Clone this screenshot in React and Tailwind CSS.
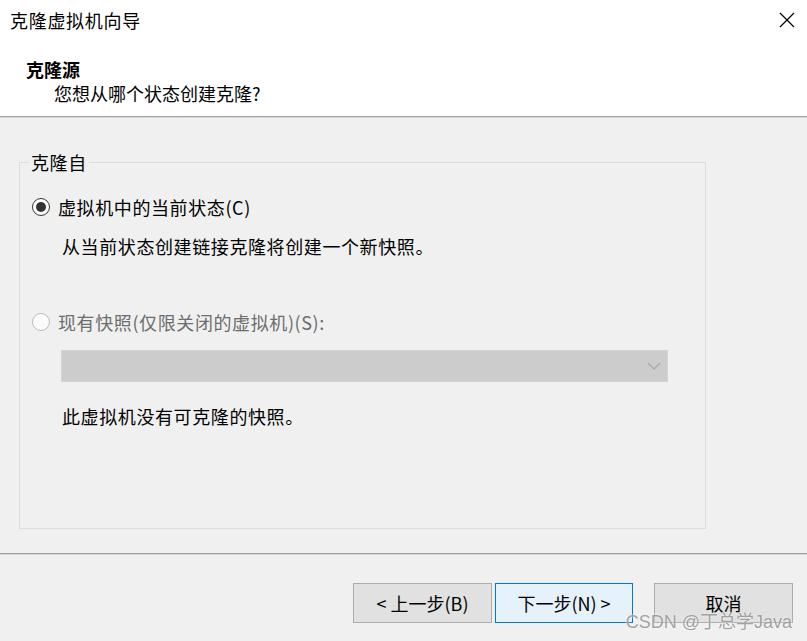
import React from "react";

function Radio({ checked, disabled }) {
	return (
		<span
			className={`w-[18px] h-[18px] rounded-full border flex items-center justify-center shrink-0 ${
				disabled ? "border-[#bcbcbc] bg-[#fbfbfb]" : "border-[#333333] bg-white"
			}`}
		>
			{checked && <span className="w-[10px] h-[10px] rounded-full bg-[#333333]"></span>}
		</span>
	);
}

function App() {
	return (
		<div className="w-[807px] h-[641px] bg-[#f0f0f0] relative overflow-hidden text-black font-['Noto_Sans_CJK_SC','Liberation_Sans',sans-serif] text-[18px]">
			{/* Header */}
			<div className="bg-white h-[116px]">
				<div className="h-[40px] flex items-center justify-between pl-[10px] pr-[12px]">
					<span className="leading-[24px] tracking-[0.7px]">克隆虚拟机向导</span>
					<svg width="16" height="16" viewBox="0 0 16 16" className="text-black">
						<path d="M1 1 L15 15 M15 1 L1 15" stroke="currentColor" strokeWidth="1.2" />
					</svg>
				</div>
				<div className="mt-[17px] pl-[26px] leading-[24px] font-bold">克隆源</div>
				<div className="pl-[54px] leading-[24px]">您想从哪个状态创建克隆?</div>
			</div>
			<div className="h-px bg-[#a0a0a0]"></div>
			<div className="h-px bg-[#d8d8d8]"></div>

			{/* Body */}
			<div className="h-[435px] pt-[32px]">
				<fieldset className="ml-[19px] w-[687px] h-[379px] border border-[#dcdcdc] tracking-[0.6px]">
					<legend className="ml-[9px] px-[2px] leading-[24px]">克隆自</legend>

					<label className="mt-[21px] ml-[12px] flex items-center gap-[8px] leading-[24px]">
						<Radio checked />
						<span>虚拟机中的当前状态(C)</span>
					</label>
					<div className="mt-[15px] ml-[42px] leading-[24px]">从当前状态创建链接克隆将创建一个新快照。</div>

					<label className="mt-[52px] ml-[12px] flex items-center gap-[8px] leading-[24px] text-[#6d6d6d]">
						<Radio disabled />
						<span>现有快照(仅限关闭的虚拟机)(S):</span>
					</label>
					<div className="mt-[16px] ml-[41px] w-[607px] h-[32px] bg-[#cccccc] border border-[#d4d4d4] flex items-center justify-end pr-[6px]">
						<svg width="14" height="8" viewBox="0 0 14 8">
							<path d="M1 1 L7 7 L13 1" fill="none" stroke="#a6a6a6" strokeWidth="1.2" />
						</svg>
					</div>
					<div className="mt-[22px] ml-[42px] leading-[24px]">此虚拟机没有可克隆的快照。</div>
				</fieldset>
			</div>
			<div className="h-px bg-[#a0a0a0]"></div>
			<div className="h-px bg-[#d8d8d8]"></div>

			{/* Footer */}
			<div className="pt-[28px] pr-[14px] flex justify-end">
				<button className="w-[139px] h-[40px] bg-[#e1e1e1] border border-[#adadad] leading-[24px]">
					&lt; 上一步(B)
				</button>
				<button className="ml-[3px] w-[138px] h-[40px] bg-[#e5f1fb] border border-[#0078d7] leading-[24px]">
					下一步(N) &gt;
				</button>
				<button className="ml-[21px] w-[139px] h-[40px] bg-[#e1e1e1] border border-[#adadad] leading-[24px]">
					取消
				</button>
			</div>

			{/* Watermark */}
			<div className="absolute right-[15px] top-[610px] leading-[24px] text-[18px] text-[#8a8a8a]/80 font-['Liberation_Sans','Noto_Sans_CJK_SC',sans-serif] [text-shadow:0_0_2px_#ffffff]">
				CSDN @丁总学Java
			</div>
		</div>
	);
}

export default App;
